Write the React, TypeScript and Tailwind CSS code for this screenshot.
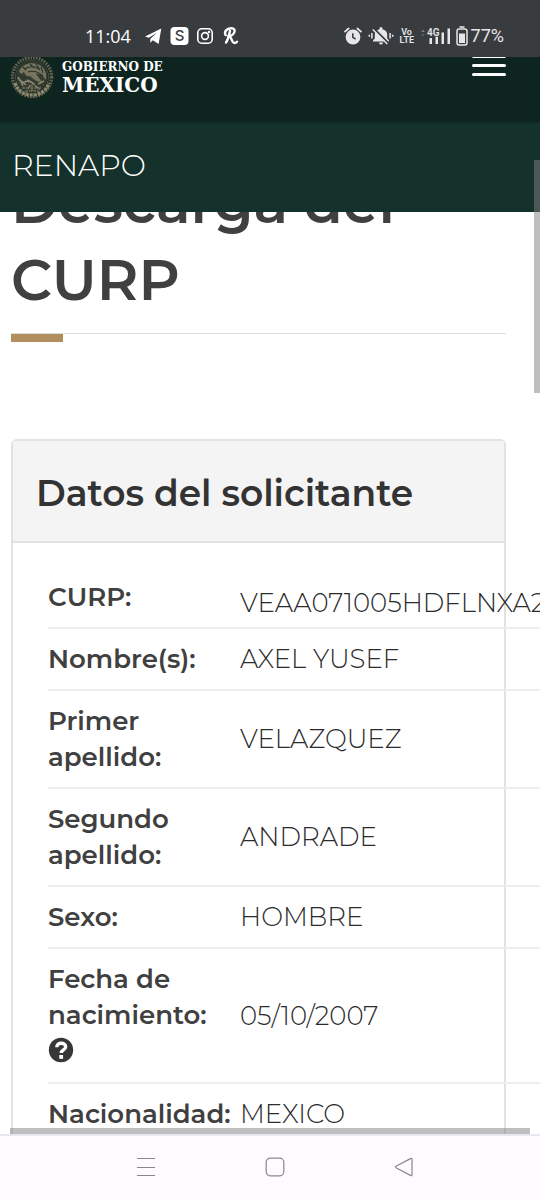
import type { ReactNode } from "react";

const rows: { label: string; value: string; help?: boolean; raised?: boolean }[] = [
  { label: "CURP:", value: "VEAA071005HDFLNXA2", raised: true },
  { label: "Nombre(s):", value: "AXEL YUSEF" },
  { label: "Primer apellido:", value: "VELAZQUEZ" },
  { label: "Segundo apellido:", value: "ANDRADE" },
  { label: "Sexo:", value: "HOMBRE" },
  { label: "Fecha de nacimiento:", value: "05/10/2007", help: true },
  { label: "Nacionalidad:", value: "MEXICO" },
];

function StatusBar() {
  return (
    <div className="flex h-[57px] shrink-0 items-end justify-between bg-[#393c3f] pb-2 pl-[85px] pr-9 font-['Open_Sans','Noto_Sans',sans-serif] text-[18px] leading-[26px] text-white">
      <div className="flex items-center">
        <span className="w-[59px]">11:04</span>
        <svg className="h-[18px] w-[18px]" viewBox="0 0 18 18" fill="currentColor" aria-hidden="true">
          <path d="M1 9.6 17.3 1.5 14.6 17 8.9 13.2 6.2 15.8 6.4 11.8 12.8 5.8 4.9 10.8Z" />
        </svg>
        <svg className="ml-2 h-[18px] w-[19px]" viewBox="0 0 19 18" aria-hidden="true">
          <rect width="18" height="18" x="0.5" rx="4" fill="white" />
          <text x="9.5" y="14.3" textAnchor="middle" fontSize="15" fontWeight="500" fill="#393c3f" fontFamily="Inter, sans-serif">S</text>
        </svg>
        <svg className="ml-[7px] h-[18px] w-[18px]" viewBox="0 0 18 18" fill="none" stroke="currentColor" strokeWidth="1.6" aria-hidden="true">
          <rect x="1.8" y="1.8" width="14.4" height="14.4" rx="4" />
          <circle cx="9" cy="9" r="3.4" />
          <circle cx="13" cy="5" r="0.5" />
        </svg>
        <svg className="ml-2 h-[20px] w-[18px]" viewBox="0 0 18 20" fill="none" stroke="currentColor" strokeLinecap="round" strokeWidth="2.4" aria-hidden="true">
          <path d="M8 5C7 9 6 14 4 16.5M3.5 9C1.8 5.5 5 2.5 9 2.3C12.5 2.2 13.5 4.5 12 7C10.800 9 9 10 7.500 10.300C10 11.500 9.500 17 12.500 17C13.500 17 14.300 16.500 15 15.700" />
        </svg>
      </div>
      <div className="flex items-center text-[#e6e6e8]">
        <svg className="h-[18px] w-[18px]" viewBox="0 0 18 18" aria-hidden="true">
          <circle cx="9" cy="10" r="7.4" fill="currentColor" />
          <path d="M1 4.600 4.600 1.500M17 4.600 13.400 1.500" stroke="currentColor" strokeWidth="1.800" strokeLinecap="round" />
          <path d="M8.800 6.200V10.300L11.600 12" fill="none" stroke="#393c3f" strokeWidth="1.500" />
        </svg>
        <svg className="ml-[6px] h-[18px] w-[26px]" viewBox="0 0 26 18" aria-hidden="true">
          <path d="M5 14.500V13.300L6.800 11.500V7.500C6.800 4.500 9 2.900 11.500 2.300V1.500A1.500 1.500 0 0 1 14.500 1.500V2.300C17 2.900 19.200 4.500 19.200 7.500V11.500L21 13.300V14.500ZM10.900 15.500H15.100A2.100 2.100 0 0 1 10.900 15.500Z" fill="currentColor" />
          <path d="M5.800 1.500 20.500 16.200" stroke="#393c3f" strokeWidth="2" />
          <path d="M4.800 2.500 19.300 17" stroke="currentColor" strokeWidth="1.500" />
          <path d="M3.900 6V11.500M1.300 7.700V9.700M22.100 6V11.500M24.700 7.700V9.700" stroke="currentColor" strokeWidth="1.500" />
        </svg>
        <span className="ml-[6px] w-[14px] text-center font-['Roboto',sans-serif] text-[9px] font-semibold leading-[8px]">
          Vo
          <br />
          LTE
        </span>
        <svg className="ml-[7px] h-[18px] w-[31px]" viewBox="0 0 31 18" fill="currentColor" aria-hidden="true">
          <path d="M0 5 2 2.500 4 5Z" opacity="0.350" />
          <path d="M0 7 2 9.500 4 7Z" opacity="0.200" />
          <text x="6" y="8.5" fontSize="10" fontWeight="600" fontFamily="Roboto, sans-serif">4G</text>
          <path d="M8.500 11h2.500v6h-2.500zM14.500 9.800h2.500v7.200h-2.500zM20.500 5.500h2.500v11.500h-2.500zM26.500 1.500h2.500v15.500h-2.500z" />
        </svg>
        <svg className="ml-1 h-[20px] w-[12px]" viewBox="0 0 12 20" aria-hidden="true">
          <path d="M3.500 1H8.500" stroke="currentColor" strokeWidth="1.600" />
          <rect x="1" y="3" width="10" height="16" rx="2.200" fill="none" stroke="currentColor" strokeWidth="1.500" />
          <rect x="3" y="7.500" width="6" height="9.500" fill="currentColor" />
        </svg>
        <span className="ml-[3px] font-['Roboto',sans-serif]">77%</span>
      </div>
    </div>
  );
}

function Seal() {
  return (
    <svg className="h-11 w-11" viewBox="0 0 44 44" fill="none" aria-hidden="true">
      <circle cx="22" cy="22" r="19.500" stroke="#5f604f" strokeWidth="3.500" strokeDasharray="1.800 1" />
      <circle cx="22" cy="22" r="16.500" stroke="#4c5144" strokeWidth="1" />
      <circle cx="22" cy="22" r="15.500" fill="#343c32" />
      <path d="M9 16C13 8 24 6 31 11C35 14 37 19 36 25C33 20 29 18 26 19L32 27C27 27 23 24 20 21C17 22 15 20 14 17L11 19Z" fill="#77745f" />
      <path d="M9 19C12 23 14 23 17 23M15 14C19 11 25 11 29 14M18 17C23 15 29 17 33 21M20 9 24 13M26 9 30 15M31 12 33 18M13 12 16 15" stroke="#2a332a" strokeWidth="1.100" />
      <path d="M8 22C9 27 14 27 16 30M12 28C17 25 22 27 25 30M17 25 23 28M28 29 34 26M10 25 13 31M20 30 18 34M25 31 30 34" stroke="#8b866c" strokeWidth="1.500" />
      <path d="M5 28C8 37 15 40 22 40C29 40 36 37 39 28" stroke="#8d886f" strokeWidth="3.200" strokeDasharray="3 1" />
      <path d="M12 33H31M15 36H29M22 29V37" stroke="#6d6b58" strokeWidth="1.500" strokeDasharray="3 1" />
    </svg>
  );
}

function SiteHeader() {
  return (
    <header className="relative z-10 shrink-0">
      <div className="flex h-[65px] items-start justify-between overflow-hidden bg-[#0d241f] pl-[10px] pr-[34px]">
        <a href="#" className="-mt-[2px] flex items-start gap-2 font-['DejaVu_Serif',serif] font-bold text-white">
          <Seal />
          <span className="pt-[5px] text-[12px] leading-[14px]">
            GOBIERNO DE
            <span className="block text-[20px] leading-[22px]">MÉXICO</span>
          </span>
        </a>
        <button type="button" aria-label="Menú" className="-mt-[2px] flex w-[34px] flex-col gap-[6px]">
          <span className="h-[3px] w-full rounded-sm bg-white" />
          <span className="h-[3px] w-full rounded-sm bg-white" />
          <span className="h-[3px] w-full rounded-sm bg-white" />
        </button>
      </div>
      <div className="flex h-[90px] items-center border-t-2 border-[#112c26] bg-[#14322b] px-3 pb-1">
        <a href="#" className="text-[30px] font-light leading-10 text-white">RENAPO</a>
      </div>
    </header>
  );
}

function HelpIcon() {
  return (
    <button type="button" aria-label="Ayuda" className="flex h-[37px] items-start pt-1">
      <svg className="h-[26px] w-[26px]" viewBox="0 0 26 26" aria-hidden="true">
        <circle cx="13" cy="13" r="12.200" fill="#373737" />
        <path d="M8.800 10.200C8.800 4.800 17.800 5 17.600 10C17.500 13 13.200 12.800 13.200 16" fill="none" stroke="white" strokeWidth="3.400" />
        <path d="M11.300 18h3.800v3.800h-3.800z" fill="white" />
      </svg>
    </button>
  );
}

function NavButton({ label, children }: { label: string; children: ReactNode }) {
  return (
    <button type="button" aria-label={label} className="text-[#8d868d]">
      <svg className="h-5 w-5" viewBox="0 0 20 20" fill="none" stroke="currentColor" strokeWidth="1.200" strokeLinejoin="round">
        {children}
      </svg>
    </button>
  );
}

export default function App() {
  return (
    <div className="relative flex h-screen flex-col overflow-hidden bg-white font-['Montserrat','Inter',sans-serif] text-[#404041]">
      <StatusBar />
      <SiteHeader />
      <main className="min-h-0 flex-1 overflow-hidden pl-[11px] pr-[34px]">
        <h1 className="-mt-[48px] border-b border-[#dddddd] pb-[15px] text-[57px] font-semibold leading-[77px]">
          Descarga del
          <br />
          CURP
        </h1>
        <div className="h-2 w-[52px] bg-[#b38e5d]" />
        <section className="mt-[97px] rounded-t-md border-2 border-[#e2e2e2]">
          <h2 className="border-b-2 border-[#e2e2e2] bg-[#f4f4f4] pb-6 pl-[23px] pr-6 pt-7 text-[36px] font-semibold leading-[48px] text-[#333]">
            Datos del solicitante
          </h2>
          <div className="pl-[35px] pt-6">
            <table className="w-[520px] table-fixed text-left text-[26px] leading-9">
              <tbody>
                {rows.map((row) => (
                  <tr key={row.label} className="border-b-2 border-[#eeeeee]">
                    <th scope="row" className={row.raised ? "w-[192px] pb-3 pr-3 pt-3 align-top font-semibold" : "w-[192px] py-3 pr-3 font-semibold"}>
                      {row.label}
                      {row.help && <HelpIcon />}
                    </th>
                    <td className={row.raised ? "pb-[6px] pt-[18px] font-light text-[#2b2b2c]" : "py-3 font-light text-[#2b2b2c]"}>{row.value}</td>
                  </tr>
                ))}
              </tbody>
            </table>
          </div>
        </section>
      </main>
      <div className="absolute right-0 top-[160px] z-20 h-[233px] w-[6px] bg-[#808080]/50" />
      <div className="absolute bottom-[66px] left-[10px] right-[10px] z-20 h-[6px] bg-[#808080]/50" />
      <nav className="flex h-[66px] shrink-0 items-center justify-between border-t-2 border-[#e9e6ef] bg-[#fefaff] pb-[2px] pl-[136px] pr-[126px]">
        <NavButton label="Recientes">
          <path d="M1 1.500H19M1 10.500H19M1 18.500H19" />
        </NavButton>
        <NavButton label="Inicio">
          <rect x="1.200" y="1.200" width="17.600" height="17.600" rx="4" />
        </NavButton>
        <NavButton label="Atrás">
          <path d="M2 9.300 16.500 1.600Q18 1 18 2.600V17.400Q18 19 16.500 18.400L2 10.700Q1 10 2 9.300Z" />
        </NavButton>
      </nav>
    </div>
  );
}
